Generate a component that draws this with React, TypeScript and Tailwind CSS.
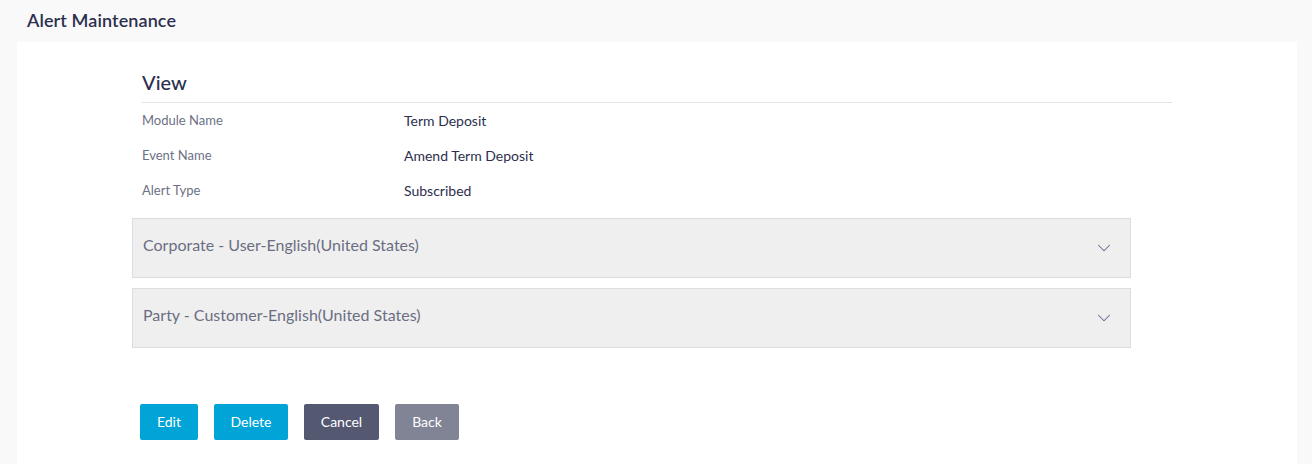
import { ChevronDown } from 'lucide-react'

const details = [
  { label: 'Module Name', value: 'Term Deposit' },
  { label: 'Event Name', value: 'Amend Term Deposit' },
  { label: 'Alert Type', value: 'Subscribed' }
]

const sections = ['Corporate - User-English(United States)', 'Party - Customer-English(United States)']

const App = () => {
  return (
    <div className="min-h-[464px] bg-[#f9f9f9] font-['Lato','Open_Sans',sans-serif] text-[#2c2f4e]">
      <h1 className="h-[42px] pl-[27px] pt-[9px] text-[18px] font-semibold leading-[22px] tracking-[0.1px]">Alert Maintenance</h1>

      <div className="ml-[17px] w-[1280px] bg-white pt-[27px] pb-[24px]">
        {/* view header */}
        <div className="ml-[125px] w-[1030px]">
          <h2 className="border-b border-[#e3e3e3] pb-[6px] text-[20px] font-medium leading-[27px]">View</h2>
          <div>
            {details.map((row) => (
              <div key={row.label} className="flex h-[35px] items-center">
                <span className="w-[262px] text-[13px] text-[#6d7185]">{row.label}</span>
                <span className="text-[14px] text-[#2c2f4e]">{row.value}</span>
              </div>
            ))}
          </div>
        </div>

        {/* accordions */}
        <div className="ml-[115px] mt-[10px] flex w-[999px] flex-col gap-[10px]">
          {sections.map((title) => (
            <div
              key={title}
              className="flex h-[60px] items-center justify-between border border-[#dadde1] bg-[#efefef] pl-[10px] pr-[15px]"
            >
              <span className="pb-[6px] text-[16px] text-[#6b6e82]">{title}</span>
              <ChevronDown className="h-[22px] w-[22px] text-[#5f6b8c]" strokeWidth={1.1} />
            </div>
          ))}
        </div>

        {/* actions */}
        <div className="ml-[123px] mt-[56px] flex gap-[16px]">
          <button className="h-[36px] w-[58px] rounded-[2px] bg-[#00a4d6] pb-[1px] text-[14px] text-white">Edit</button>
          <button className="h-[36px] w-[74px] rounded-[2px] bg-[#00a4d6] pb-[1px] text-[14px] text-white">Delete</button>
          <button className="h-[36px] w-[75px] rounded-[2px] bg-[#545870] pb-[1px] text-[14px] text-white">Cancel</button>
          <button className="h-[36px] w-[64px] rounded-[2px] bg-[#808494] pb-[1px] text-[14px] text-white">Back</button>
        </div>
      </div>
    </div>
  )
}

export default App
